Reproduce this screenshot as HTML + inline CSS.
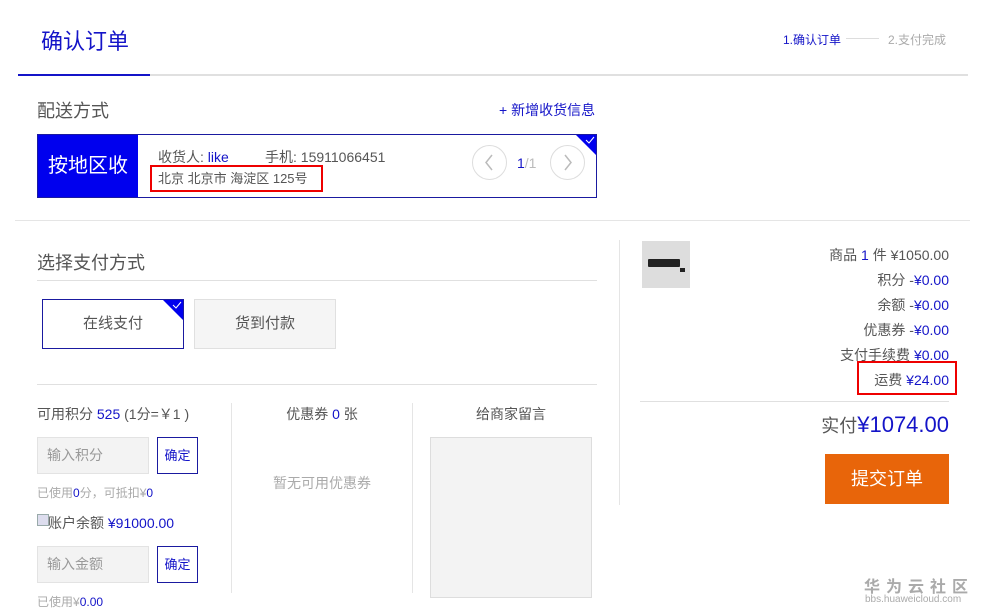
<!DOCTYPE html>
<html><head><meta charset="utf-8"><style>
*{margin:0;padding:0;box-sizing:border-box}
body{width:986px;height:615px;background:#fff;position:relative;overflow:hidden;font-family:"Liberation Sans","Noto Sans CJK SC",sans-serif;color:#555}
.a{position:absolute;white-space:nowrap}
.b{color:#1414c8}
.r{position:absolute;right:37px;font-size:14px;text-align:right;white-space:nowrap}
</style></head><body>
<div class="a b" style="left:41px;top:24px;font-size:22px">确认订单</div>
<div class="a b" style="left:783px;top:31px;font-size:12px">1.确认订单</div>
<div class="a" style="left:846px;top:38px;width:33px;height:1px;background:#ddd"></div>
<div class="a" style="left:888px;top:31px;font-size:12px;color:#aaa">2.支付完成</div>
<div class="a" style="left:18px;top:74px;width:950px;height:2px;background:#e0e0e0"></div>
<div class="a" style="left:18px;top:74px;width:132px;height:2px;background:#1414c8"></div>

<div class="a" style="left:37px;top:97px;font-size:18px">配送方式</div>
<div class="a b" style="left:499px;top:100px;font-size:14px">+ 新增收货信息</div>
<div class="a" style="left:37px;top:134px;width:560px;height:64px;border:1px solid #1a1aa0;overflow:hidden">
 <div class="a" style="left:0;top:0;width:100px;height:62px;background:#0000ee;color:#fff;font-size:20px;line-height:62px;text-align:center">按地区收</div>
 <div class="a" style="left:120px;top:12px;font-size:14px">收货人: <span class="b">like</span></div>
 <div class="a" style="left:227px;top:12px;font-size:14px">手机: 15911066451</div>
 <div class="a" style="left:120px;top:33px;font-size:13px">北京 北京市 海淀区 125号</div>
 <div class="a" style="left:434px;top:10px;width:35px;height:35px;border:1px solid #ddd;border-radius:50%"><svg width="33" height="33" style="position:absolute;left:0;top:0"><path d="M19 9 L13 16.5 L19 24" fill="none" stroke="#bbb" stroke-width="1.5"/></svg></div>
 <div class="a" style="left:479px;top:20px;font-size:14px"><span class="b">1</span><span style="color:#bbb">/1</span></div>
 <div class="a" style="left:512px;top:10px;width:35px;height:35px;border:1px solid #ddd;border-radius:50%"><svg width="33" height="33" style="position:absolute;left:0;top:0"><path d="M14 9 L20 16.5 L14 24" fill="none" stroke="#bbb" stroke-width="1.5"/></svg></div>
 <div class="a" style="right:0;top:0;width:0;height:0;border-top:20px solid #0000ee;border-left:20px solid transparent"></div>
 <svg class="a" style="right:1px;top:1px" width="10" height="8"><path d="M1 4 L4 7 L9 1" fill="none" stroke="#fff" stroke-width="1"/></svg>
</div>
<div class="a" style="left:150px;top:165px;width:173px;height:27px;border:2px solid #e00"></div>
<div class="a" style="left:15px;top:220px;width:955px;height:1px;background:#e5e5e5"></div>
<div class="a" style="left:619px;top:240px;width:1px;height:265px;background:#e5e5e5"></div>

<div class="a" style="left:37px;top:249px;font-size:18px">选择支付方式</div>
<div class="a" style="left:37px;top:280px;width:560px;height:1px;background:#e0e0e0"></div>
<div class="a" style="left:42px;top:299px;width:142px;height:50px;border:1px solid #1a1aa0;font-size:15px;text-align:center;line-height:48px;overflow:hidden">在线支付
 <div class="a" style="right:0;top:0;width:0;height:0;border-top:20px solid #0000ee;border-left:20px solid transparent"></div>
 <svg class="a" style="right:1px;top:1px" width="10" height="8"><path d="M1 4 L4 7 L9 1" fill="none" stroke="#fff" stroke-width="1"/></svg></div>
<div class="a" style="left:194px;top:299px;width:142px;height:50px;border:1px solid #e0e0e0;background:#f5f5f5;font-size:15px;text-align:center;line-height:48px">货到付款</div>
<div class="a" style="left:37px;top:384px;width:560px;height:1px;background:#e0e0e0"></div>

<div class="a" style="left:37px;top:404px;font-size:14px">可用积分 <span class="b">525</span> (1分=￥1 )</div>
<div class="a" style="left:37px;top:437px;width:112px;height:37px;background:#f3f3f3;border:1px solid #e3e3e3;font-size:14px;color:#999;line-height:35px;padding-left:9px">输入积分</div>
<div class="a b" style="left:157px;top:437px;width:41px;height:37px;border:1px solid #1a1aa0;font-size:13px;line-height:35px;text-align:center">确定</div>
<div class="a" style="left:37px;top:484px;font-size:12px;color:#aaa">已使用<span class="b">0</span>分，可抵扣¥<span class="b">0</span></div>
<div class="a" style="left:37px;top:514px;width:12px;height:12px;border:1px solid #9aa;background:#dde"></div>
<div class="a" style="left:48px;top:513px;font-size:14px">账户余额 <span class="b">¥91000.00</span></div>
<div class="a" style="left:37px;top:546px;width:112px;height:37px;background:#f3f3f3;border:1px solid #e3e3e3;font-size:14px;color:#999;line-height:35px;padding-left:9px">输入金额</div>
<div class="a b" style="left:157px;top:546px;width:41px;height:37px;border:1px solid #1a1aa0;font-size:13px;line-height:35px;text-align:center">确定</div>
<div class="a" style="left:37px;top:593px;font-size:12px;color:#aaa">已使用¥<span class="b">0.00</span></div>

<div class="a" style="left:231px;top:403px;width:1px;height:190px;background:#e5e5e5"></div>
<div class="a" style="left:412px;top:403px;width:1px;height:190px;background:#e5e5e5"></div>
<div class="a" style="left:232px;top:404px;width:180px;text-align:center;font-size:14px">优惠券 <span class="b">0</span> 张</div>
<div class="a" style="left:232px;top:473px;width:180px;text-align:center;font-size:14px;color:#aaa">暂无可用优惠券</div>
<div class="a" style="left:413px;top:404px;width:196px;text-align:center;font-size:14px">给商家留言</div>
<div class="a" style="left:430px;top:437px;width:162px;height:161px;background:#f3f3f3;border:1px solid #ddd"></div>

<div class="a" style="left:642px;top:241px;width:48px;height:47px;background:#ddd"><div class="a" style="left:6px;top:18px;width:32px;height:8px;background:#222;border-radius:1px"></div><div class="a" style="left:38px;top:27px;width:5px;height:4px;background:#222"></div></div>
<div class="r" style="top:245px">商品 <span class="b">1</span> 件 ¥1050.00</div>
<div class="r" style="top:270px">积分 -<span class="b">¥0.00</span></div>
<div class="r" style="top:295px">余额 -<span class="b">¥0.00</span></div>
<div class="r" style="top:320px">优惠券 -<span class="b">¥0.00</span></div>
<div class="r" style="top:345px">支付手续费 <span class="b">¥0.00</span></div>
<div class="r" style="top:370px">运费 <span class="b">¥24.00</span></div>
<div class="a" style="left:857px;top:361px;width:100px;height:34px;border:2px solid #e00"></div>
<div class="a" style="left:640px;top:401px;width:309px;height:1px;background:#e0e0e0"></div>
<div class="r" style="top:412px;font-size:18px">实付<span class="b" style="font-size:22px">¥1074.00</span></div>
<div class="a" style="left:825px;top:454px;width:124px;height:50px;background:#e8650a;color:#fff;font-size:18px;text-align:center;line-height:50px">提交订单</div>
<div class="a" style="left:864px;top:573px;font-size:16px;color:#aaa;letter-spacing:6px;font-weight:bold">华为云社区</div>
<div class="a" style="left:865px;top:594px;font-size:10px;color:#aaa">bbs.huaweicloud.com</div>
</body></html>
